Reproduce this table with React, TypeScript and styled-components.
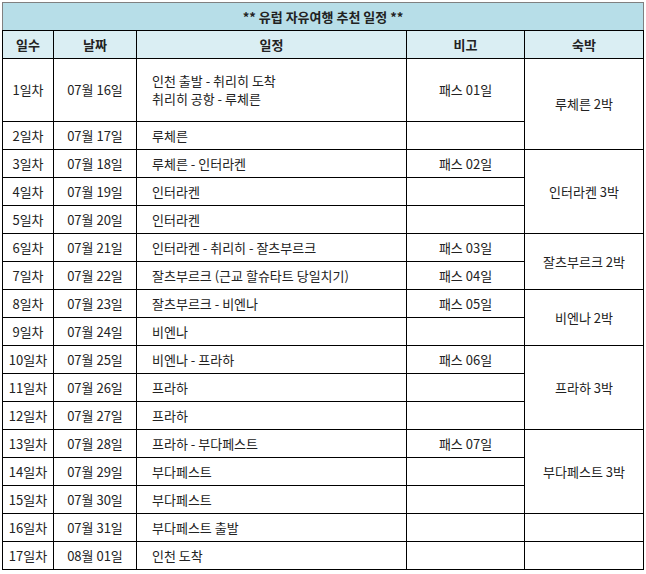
import React from 'react';
import styled, { createGlobalStyle } from 'styled-components';

const GlobalStyle = createGlobalStyle`
  html, body {
    margin: 0;
    padding: 0;
    background: #ffffff;
  }
  body {
    font-family: "Noto Sans CJK KR", "Noto Sans", sans-serif;
  }
`;

type Row = {
  day: string;
  date: string;
  plan: string[];
  note?: string;
  stay?: { label: string; span: number };
  tall?: boolean;
};

const rows: Row[] = [
  { day: '1일차', date: '07월 16일', plan: ['인천 출발 - 취리히 도착', '취리히 공항 - 루체른'], note: '패스 01일', stay: { label: '루체른 2박', span: 2 }, tall: true },
  { day: '2일차', date: '07월 17일', plan: ['루체른'] },
  { day: '3일차', date: '07월 18일', plan: ['루체른 - 인터라켄'], note: '패스 02일', stay: { label: '인터라켄 3박', span: 3 } },
  { day: '4일차', date: '07월 19일', plan: ['인터라켄'] },
  { day: '5일차', date: '07월 20일', plan: ['인터라켄'] },
  { day: '6일차', date: '07월 21일', plan: ['인터라켄 - 취리히 - 잘츠부르크'], note: '패스 03일', stay: { label: '잘츠부르크 2박', span: 2 } },
  { day: '7일차', date: '07월 22일', plan: ['잘츠부르크 (근교 할슈타트 당일치기)'], note: '패스 04일' },
  { day: '8일차', date: '07월 23일', plan: ['잘츠부르크 - 비엔나'], note: '패스 05일', stay: { label: '비엔나 2박', span: 2 } },
  { day: '9일차', date: '07월 24일', plan: ['비엔나'] },
  { day: '10일차', date: '07월 25일', plan: ['비엔나 - 프라하'], note: '패스 06일', stay: { label: '프라하 3박', span: 3 } },
  { day: '11일차', date: '07월 26일', plan: ['프라하'] },
  { day: '12일차', date: '07월 27일', plan: ['프라하'] },
  { day: '13일차', date: '07월 28일', plan: ['프라하 - 부다페스트'], note: '패스 07일', stay: { label: '부다페스트 3박', span: 3 } },
  { day: '14일차', date: '07월 29일', plan: ['부다페스트'] },
  { day: '15일차', date: '07월 30일', plan: ['부다페스트'] },
  { day: '16일차', date: '07월 31일', plan: ['부다페스트 출발'], stay: { label: '', span: 1 } },
  { day: '17일차', date: '08월 01일', plan: ['인천 도착'], stay: { label: '', span: 1 } },
];

export default function App() {
  return (
    <>
      <GlobalStyle />
      <Page>
        <Schedule>
          <colgroup>
            <col style={{ width: 51 }} />
            <col style={{ width: 83 }} />
            <col style={{ width: 270 }} />
            <col style={{ width: 118 }} />
            <col style={{ width: 119 }} />
          </colgroup>
          <thead>
            <TitleRow>
              <TitleCell colSpan={5}>** 유럽 자유여행 추천 일정 **</TitleCell>
            </TitleRow>
            <HeadRow>
              <HeadCell>일수</HeadCell>
              <HeadCell>날짜</HeadCell>
              <HeadCell>일정</HeadCell>
              <HeadCell>비고</HeadCell>
              <HeadCell>숙박</HeadCell>
            </HeadRow>
          </thead>
          <tbody>
            {rows.map((r) => (
              <BodyRow key={r.day} $tall={r.tall}>
                <Cell>{r.day}</Cell>
                <Cell>{r.date}</Cell>
                <PlanCell>
                  {r.plan.map((line) => (
                    <div key={line}>{line}</div>
                  ))}
                </PlanCell>
                <Cell>{r.note ?? ''}</Cell>
                {r.stay && <Cell rowSpan={r.stay.span}>{r.stay.label}</Cell>}
              </BodyRow>
            ))}
          </tbody>
        </Schedule>
      </Page>
    </>
  );
}

const Page = styled.div`
  padding: 2px 0 0 2px;
`;

const Schedule = styled.table`
  width: 642px;
  table-layout: fixed;
  border-collapse: collapse;
  color: #222222;
  font-size: 13px;
  border: 1px solid #000000;
`;

const TitleRow = styled.tr`
  height: 28px;
  background: #b7dee8;
`;

const TitleCell = styled.td`
  text-align: center;
  font-weight: bold;
  padding: 0;
  border: 1px solid #808080;
  border-bottom: 1px solid #000000;
`;

const HeadRow = styled.tr`
  height: 28px;
  background: #daeef3;
`;

const HeadCell = styled.th`
  font-weight: bold;
  text-align: center;
  padding: 0;
  border: 1px solid #000000;
`;

const BodyRow = styled.tr<{ $tall?: boolean }>`
  height: ${(p) => (p.$tall ? '63px' : '28px')};
`;

const Cell = styled.td`
  text-align: center;
  vertical-align: middle;
  padding: 0;
  border: 1px solid #000000;
  white-space: nowrap;
  line-height: 18px;
`;

const PlanCell = styled(Cell)`
  text-align: left;
  padding-left: 15px;
`;
